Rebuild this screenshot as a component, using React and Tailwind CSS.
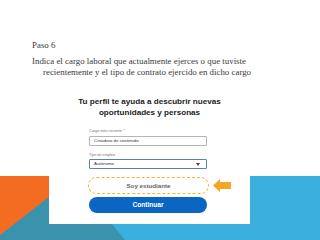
export default function App() {
    return (
        <div className="w-[320px] h-[240px] bg-white flex flex-col overflow-hidden">
            {/* Slide text */}
            <div className="h-[86px] shrink-0 pt-[40px] pl-[32px] text-[#3a3a3a] font-['Liberation_Serif',serif] text-[8.9px]">
                <p className="leading-[11px]">Paso 6</p>
                <p className="mt-[5px] w-[240px] leading-[11px] pl-[11px] -indent-[11px]">
                    Indica el cargo laboral que actualmente ejerces o que tuviste recientemente y el tipo de contrato ejercido en dicho cargo
                </p>
            </div>

            {/* Screenshot row */}
            <div className="h-[138px] shrink-0 flex">
                <div className="w-[49px] flex flex-col">
                    <div className="flex-1 bg-white" />
                    <svg width="49" height="48" viewBox="0 0 49 48" className="block">
                        <rect width="49" height="48" fill="#F36C21" />
                        <polygon points="49,21 49,48 14.2,48" fill="#3A92AD" />
                    </svg>
                </div>

                <div className="w-[201px] bg-white pt-[10px] font-['Liberation_Sans',sans-serif]">
                    <h1 className="text-center font-bold text-[8.1px] leading-[11px] text-[#222]">
                        Tu perfil te ayuda a descubrir nuevas<br />oportunidades y personas
                    </h1>
                    <div className="pl-[40px]">
                        <p className="mt-[10px] text-[3.8px] leading-[6px] text-[#777]">Cargo más reciente *</p>
                        <div className="mt-[2px] w-[118px] h-[10px] border border-[#b5b5b5] rounded-[1px] flex items-center px-[4px] text-[4.4px] text-[#333]">
                            Creadora de contenido
                        </div>
                        <p className="mt-[6px] text-[3.8px] leading-[6px] text-[#777]">Tipo de empleo</p>
                        <div className="mt-[1px] w-[118px] h-[10px] border border-[#5b7fb3] rounded-[1px] flex items-center justify-between pl-[4px] pr-[6px] text-[4.4px] text-[#333]">
                            <span>Autónomo</span>
                            <svg width="4" height="3" viewBox="0 0 4 3"><polygon points="0,0 4,0 2,3" fill="#444" /></svg>
                        </div>
                        <div className="mt-[8px] -ml-[1px] flex items-center">
                            <div className="w-[121px] h-[17px] rounded-full border border-dashed border-[#F4AE3A] flex items-center justify-center text-[6.2px] font-bold text-[#666]">
                                Soy estudiante
                            </div>
                            <svg width="18" height="13" viewBox="0 0 18 13" className="ml-[4px]">
                                <polygon points="0,6.5 7,0 7,3 18,3 18,10 7,10 7,13" fill="#F5A623" />
                            </svg>
                        </div>
                        <button className="mt-[3px] w-[118px] h-[16px] rounded-full bg-[#0A66C2] text-white text-[6.6px] font-bold flex items-center justify-center">
                            Continuar
                        </button>
                    </div>
                </div>

                <div className="flex-1 flex flex-col">
                    <div className="flex-1 bg-white" />
                    <div className="h-[48px] bg-[#3BB0DF]" />
                </div>
            </div>

            {/* Bottom band */}
            <svg width="320" height="16" viewBox="0 0 320 16" className="block shrink-0">
                <rect width="320" height="16" fill="#3BB0DF" />
                <polygon points="14.2,0 112,0 125,16 0,16 0,11" fill="#3A92AD" />
                <polygon points="0,0 14.2,0 0,11" fill="#F36C21" />
            </svg>
        </div>
    );
}
